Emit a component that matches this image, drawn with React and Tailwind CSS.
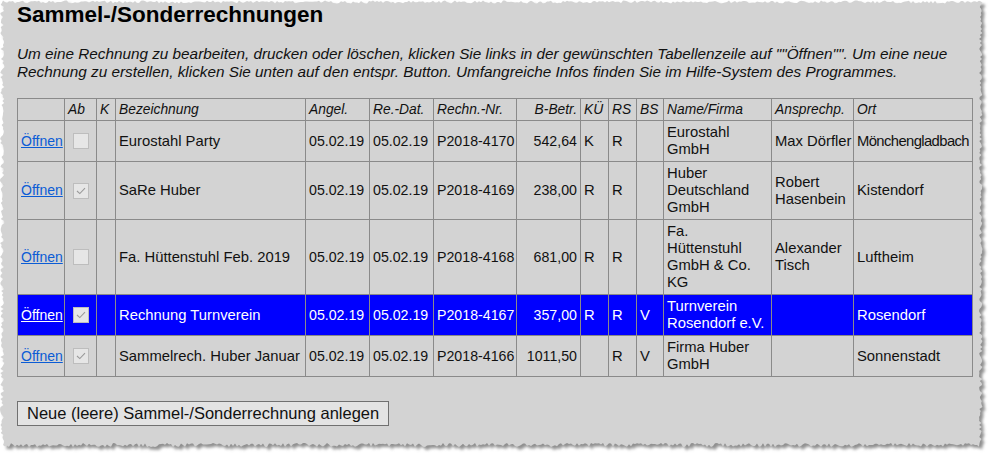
import React from "react";

// deterministic jitter for the torn paper edge
const makeRand = (seed) => () => {
  seed = (seed * 16807) % 2147483647;
  return (seed - 1) / 2147483646;
};

const tornPoints = () => {
  const r = makeRand(42);
  const pts = [];
  for (let x = 3; x <= 981; x += 2) pts.push([x, 0.5 + r() * 3]);
  for (let y = 3; y <= 443; y += 2) pts.push([979 + r() * 3.5, y]);
  for (let x = 979; x >= 3; x -= 2) pts.push([x, 443 + r() * 4]);
  for (let y = 443; y >= 3; y -= 2) pts.push([r() * 4.5, y]);
  return pts.map(([x, y]) => `${x.toFixed(1)},${y.toFixed(1)}`).join(" ");
};

const PAPER = tornPoints();

const cols = [47, 32, 19, 190, 64, 64, 83, 64, 28, 28, 27, 108, 82, 119];

const headers = [
  "", "Ab", "K", "Bezeichnung", "Angel.", "Re.-Dat.", "Rechn.-Nr.", "B-Betr.",
  "KÜ", "RS", "BS", "Name/Firma", "Ansprechp.", "Ort",
];

const rows = [
  { checked: false, name: "Eurostahl Party", angel: "05.02.19", redat: "05.02.19", nr: "P2018-4170", betr: "542,64", ku: "K", rs: "R", bs: "", firma: ["Eurostahl", "GmbH"], ansp: ["Max Dörfler"], ort: "Mönchengladbach" },
  { checked: true, name: "SaRe Huber", angel: "05.02.19", redat: "05.02.19", nr: "P2018-4169", betr: "238,00", ku: "R", rs: "R", bs: "", firma: ["Huber", "Deutschland", "GmbH"], ansp: ["Robert", "Hasenbein"], ort: "Kistendorf" },
  { checked: false, name: "Fa. Hüttenstuhl Feb. 2019", angel: "05.02.19", redat: "05.02.19", nr: "P2018-4168", betr: "681,00", ku: "R", rs: "R", bs: "", firma: ["Fa.", "Hüttenstuhl", "GmbH & Co.", "KG"], ansp: ["Alexander", "Tisch"], ort: "Luftheim" },
  { checked: true, selected: true, name: "Rechnung Turnverein", angel: "05.02.19", redat: "05.02.19", nr: "P2018-4167", betr: "357,00", ku: "R", rs: "R", bs: "V", firma: ["Turnverein", "Rosendorf e.V."], ansp: [], ort: "Rosendorf" },
  { checked: true, name: "Sammelrech. Huber Januar", angel: "05.02.19", redat: "05.02.19", nr: "P2018-4166", betr: "1011,50", ku: "", rs: "R", bs: "V", firma: ["Firma Huber", "GmbH"], ansp: [], ort: "Sonnenstadt" },
];

const Check = ({ checked }) => (
  <span className="mx-auto flex h-[16px] w-[16px] items-center justify-center border border-[#bdbdbd] bg-[#e6e6e6]">
    {checked && (
      <svg width="10" height="8" viewBox="0 0 10 8">
        <path d="M1 4 L3.8 6.6 L9 1.2" fill="none" stroke="#9a9a9a" strokeWidth="1.1" />
      </svg>
    )}
  </span>
);

const Lines = ({ items }) => items.map((t, i) => <div key={i}>{t}</div>);

export default function App() {
  const td = "border border-[#8a8a8a] px-[3px] py-[3px] align-middle";
  const nw = `${td} whitespace-nowrap`;
  const num = `${nw} text-[14.2px]`;

  return (
    <div className="relative h-[456px] w-[990px] overflow-hidden bg-white font-['Liberation_Sans',Arial,sans-serif] text-[#111]">
      <svg className="absolute inset-0" width="990" height="456">
        <defs>
          <filter id="sh" x="-5%" y="-5%" width="110%" height="110%">
            <feGaussianBlur stdDeviation="1.6" />
          </filter>
        </defs>
        <polygon points={PAPER} fill="#8f8f8f" transform="translate(3 3)" filter="url(#sh)" />
        <polygon points={PAPER} fill="#d3d3d3" />
      </svg>

      <div className="relative pl-[17px] pt-[2px]">
        <h1 className="text-[22.5px] font-bold leading-[25px] text-black">Sammel-/Sonderrechnungen</h1>
        <p className="mt-[18px] w-[950px] text-[15.3px] italic leading-[18px]">
          Um eine Rechnung zu bearbeiten, drucken oder löschen, klicken Sie links in der gewünschten Tabellenzeile auf ""Öffnen"". Um eine neue Rechnung zu erstellen, klicken Sie unten auf den entspr. Button. Umfangreiche Infos finden Sie im Hilfe-System des Programmes.
        </p>

        <table className="mt-[17px] w-[956px] table-fixed border-collapse text-[14.8px] leading-[17px]">
          <colgroup>
            {cols.map((w, i) => (
              <col key={i} style={{ width: w }} />
            ))}
          </colgroup>
          <thead>
            <tr>
              {headers.map((h, i) => (
                <th
                  key={i}
                  className={`${nw} text-[13.8px] font-normal italic leading-[15px] ${i === 7 ? "text-right" : "text-left"}`}
                >
                  {h}
                </th>
              ))}
            </tr>
          </thead>
          <tbody>
            {rows.map((r, i) => (
              <tr key={i} className={r.selected ? "bg-[#0000ff] text-white" : ""}>
                <td className={nw}>
                  <a href="#" className={`text-[14px] underline ${r.selected ? "text-white" : "text-[#0b5cd5]"}`}>
                    Öffnen
                  </a>
                </td>
                <td className={td}>
                  <Check checked={r.checked} />
                </td>
                <td className={td}></td>
                <td className={nw}>{r.name}</td>
                <td className={num}>{r.angel}</td>
                <td className={num}>{r.redat}</td>
                <td className={num}>{r.nr}</td>
                <td className={`${num} text-right`}>{r.betr}</td>
                <td className={nw}>{r.ku}</td>
                <td className={nw}>{r.rs}</td>
                <td className={nw}>{r.bs}</td>
                <td className={nw}>
                  <Lines items={r.firma} />
                </td>
                <td className={nw}>
                  <Lines items={r.ansp} />
                </td>
                <td className={`${nw} ${r.ort.length > 12 ? "tracking-[-0.6px]" : ""}`}>{r.ort}</td>
              </tr>
            ))}
          </tbody>
        </table>

        <button className="mt-[24px] h-[25px] border border-[#707070] bg-[#e3e3e3] px-[9px] text-[16.5px] leading-[19px] text-[#111]">
          Neue (leere) Sammel-/Sonderrechnung anlegen
        </button>
      </div>
    </div>
  );
}
